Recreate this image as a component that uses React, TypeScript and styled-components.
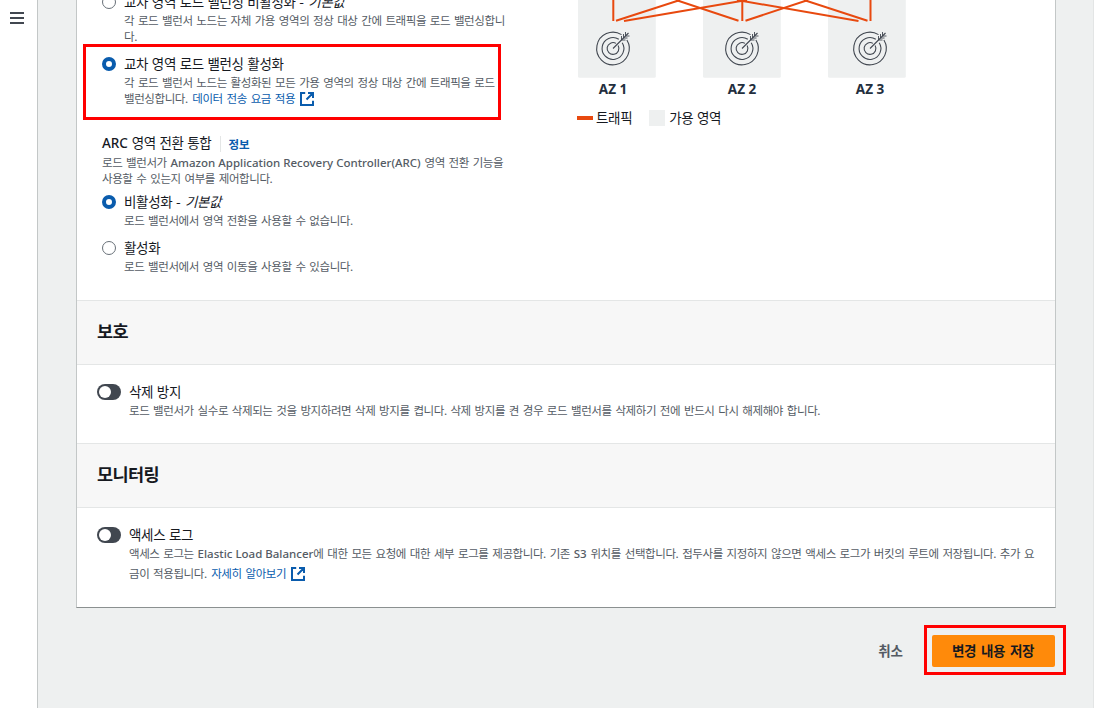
import React from 'react';
import styled, { createGlobalStyle, css } from 'styled-components';

const colors = {
  text: '#16191f',
  muted: '#545b64',
  link: '#0a5cad',
  page: '#eef0f0',
  border: '#e4e6e6',
  traffic: '#e8490f',
  mark: '#ff0000',
};

interface RadioOptionProps {
  label: string;
  isDefault?: boolean;
  checked?: boolean;
  gap?: number;
  children: React.ReactNode;
}

const ExternalIcon = () => (
  <IconSvg width="14" height="14" viewBox="0 0 14 14">
    <path d="M5.2 1H1v12h12V8.8M8 1h5v5M13 1L6.5 7.5" />
  </IconSvg>
);

const RadioOption: React.FC<RadioOptionProps> = ({
  label,
  isDefault = false,
  checked = false,
  gap = 0,
  children,
}) => (
  <Option $gap={gap}>
    <Radio $checked={checked} />
    <div>
      <Label>
        {label}
        {isDefault && (
          <>
            {' '}- <DefaultMark>기본값</DefaultMark>
          </>
        )}
      </Label>
      <Description>{children}</Description>
    </div>
  </Option>
);

const Target: React.FC<{ x: number }> = ({ x }) => (
  <g transform={`translate(${x} 48.5)`} fill="none" stroke="#414750" strokeWidth="1.1">
    <path d="M8.5 -13.9A16.3 16.3 0 1 0 13.9 -8.5" />
    <path d="M5.8 -9.2A10.9 10.9 0 1 0 9.2 -5.8" />
    <path d="M3 -5.1A5.9 5.9 0 1 0 5.1 -3" />
    <path d="M0 0L15.5 -15.5" />
    <path
      d="M8.5 -8.5V-12.5M8.5 -8.5H12.5M10.5 -10.5V-14.5M10.5 -10.5H14.5M12.5 -12.5V-16.5M12.5 -12.5H16.5"
      strokeWidth="0.9"
    />
  </g>
);

const ZoneDiagram = () => (
  <svg width="328" height="98" viewBox="578 0 328 98">
    {[578, 703, 828].map((x) => (
      <rect key={x} x={x} y="-4" width="77.8" height="81.7" rx="1.5" fill={colors.page} />
    ))}
    <g stroke={colors.traffic} strokeWidth="2">
      <path d="M613.3 0V21M742.3 0V21M870.5 0V21" />
      <path d="M680 0L616 20.7M747 0L624 21" />
      <path d="M676 0L738.5 20.7M808 0L745.5 20.7" />
      <path d="M737 0L858.5 21M804 0L867.5 20.7" />
    </g>
    {[613, 742, 870].map((x, i) => (
      <React.Fragment key={x}>
        <Target x={x} />
        <ZoneName x={x} y="94" textAnchor="middle">
          AZ {i + 1}
        </ZoneName>
      </React.Fragment>
    ))}
  </svg>
);

export default function App() {
  return (
    <>
      <GlobalStyle />
      <Page>
        <SideBar>
          <MenuIcon>
            <span />
            <span />
            <span />
          </MenuIcon>
        </SideBar>
        <Main>
          <Panel>
            <Routing>
              <Settings>
                <RadioOption label="교차 영역 로드 밸런싱 비활성화" isDefault>
                  각 로드 밸런서 노드는 자체 가용 영역의 정상 대상 간에 트래픽을 로드 밸런싱합니
                  <br />
                  다.
                </RadioOption>
                <Highlight>
                  <RadioOption label="교차 영역 로드 밸런싱 활성화" checked>
                    각 로드 밸런서 노드는 활성화된 모든 가용 영역의 정상 대상 간에 트래픽을 로드
                    <br />
                    밸런싱합니다. <Link>데이터 전송 요금 적용</Link>
                    <ExternalIcon />
                  </RadioOption>
                </Highlight>
                <FieldTitle>
                  <Label>
                    <Latin>ARC</Latin> 영역 전환 통합
                  </Label>
                  <InfoLink>정보</InfoLink>
                </FieldTitle>
                <Description>
                  로드 밸런서가 <Latin>Amazon Application Recovery Controller(ARC)</Latin> 영역 전환
                  기능을
                  <br />
                  사용할 수 있는지 여부를 제어합니다.
                </Description>
                <RadioOption label="비활성화" isDefault checked gap={7}>
                  로드 밸런서에서 영역 전환을 사용할 수 없습니다.
                </RadioOption>
                <RadioOption label="활성화" gap={11}>
                  로드 밸런서에서 영역 이동을 사용할 수 있습니다.
                </RadioOption>
              </Settings>
              <Diagram>
                <ZoneDiagram />
                <Legend>
                  <TrafficSwatch />
                  <LegendLabel>트래픽</LegendLabel>
                  <ZoneSwatch />
                  <LegendLabel>가용 영역</LegendLabel>
                </Legend>
              </Diagram>
            </Routing>
            <SectionHeader>보호</SectionHeader>
            <ToggleRow $height={78}>
              <Toggle />
              <div>
                <Label>삭제 방지</Label>
                <Description>
                  로드 밸런서가 실수로 삭제되는 것을 방지하려면 삭제 방지를 켭니다. 삭제 방지를 켠 경우 로드
                  밸런서를 삭제하기 전에 반드시 다시 해제해야 합니다.
                </Description>
              </div>
            </ToggleRow>
            <SectionHeader>모니터링</SectionHeader>
            <ToggleRow $height={99}>
              <Toggle />
              <div>
                <Label>액세스 로그</Label>
                <Description $tall>
                  액세스 로그는 <Latin>Elastic Load Balancer</Latin>에 대한 모든 요청에 대한 세부 로그를
                  제공합니다. 기존 <Latin>S3</Latin> 위치를 선택합니다. 접두사를 지정하지 않으면 액세스
                  로그가 버킷의 루트에 저장됩니다. 추가 요
                  <br />
                  금이 적용됩니다. <Link>자세히 알아보기</Link>
                  <ExternalIcon />
                </Description>
              </div>
            </ToggleRow>
          </Panel>
          <Footer>
            <CancelButton type="button">취소</CancelButton>
            <SaveFrame>
              <SaveButton type="button">변경 내용 저장</SaveButton>
            </SaveFrame>
          </Footer>
        </Main>
      </Page>
    </>
  );
}

const GlobalStyle = createGlobalStyle`
  * {
    box-sizing: border-box;
  }
  body {
    margin: 0;
    overflow: hidden;
    color: ${colors.text};
    font-family: 'Noto Sans CJK KR', sans-serif;
  }
`;

const Page = styled.div`
  display: flex;
  height: 708px;
  overflow: hidden;
  background: ${colors.page};
`;

const SideBar = styled.aside`
  flex: 0 0 38px;
  padding: 12px 0 0 10px;
  background: #ffffff;
  border-right: 1px solid #c3c7c7;
`;

const MenuIcon = styled.div`
  display: flex;
  flex-direction: column;
  gap: 3px;
  width: 14px;

  span {
    height: 2px;
    background: #414750;
  }
`;

const Main = styled.main`
  flex: 1;
  padding: 0 27px 0 38px;
  border-right: 1px solid #e3e5e5;
`;

const Panel = styled.section`
  width: 980px;
  height: 608px;
  overflow: hidden;
  background: #ffffff;
  border: solid #c3c7c7;
  border-width: 0 1px 1px;
  border-bottom-color: #8b9090;
`;

const Routing = styled.div`
  display: flex;
  height: 300px;
`;

const Settings = styled.div`
  flex: 0 0 501px;
  padding-left: 25px;
  margin-top: -7px;
`;

const Option = styled.div<{ $gap: number }>`
  display: flex;
  gap: 8px;
  margin-top: ${({ $gap }) => $gap}px;
`;

const Radio = styled.span<{ $checked: boolean }>`
  flex: 0 0 14px;
  height: 14px;
  margin-top: 2px;
  background: #ffffff;
  border-radius: 50%;
  border: ${({ $checked }) => ($checked ? `4.5px solid ${colors.link}` : '1px solid #687078')};
`;

const labelText = css`
  font-size: 13.5px;
  line-height: 16px;
  letter-spacing: -0.35px;
  word-spacing: 1px;
  white-space: nowrap;
`;

const Label = styled.div`
  ${labelText}
  padding-bottom: 3px;
`;

const DefaultMark = styled.em`
  margin-left: 1px;
`;

const LegendLabel = styled.span`
  ${labelText}
`;

const Description = styled.div<{ $tall?: boolean }>`
  color: ${colors.muted};
  font-size: 11.5px;
  line-height: ${({ $tall }) => ($tall ? 20 : 16)}px;
  letter-spacing: -0.41px;
  word-spacing: 1.6px;
  white-space: nowrap;
  margin-top: ${({ $tall }) => ($tall ? -2 : 0)}px;
`;

const Latin = styled.span`
  font-family: 'Noto Sans', sans-serif;
  font-weight: 500;
  line-height: 1;
  letter-spacing: 0;
  word-spacing: 0;
`;

const Highlight = styled.div`
  width: 418px;
  height: 76px;
  margin: 0 0 0 -19px;
  padding: 8px 0 0 16px;
  border: 3px solid ${colors.mark};
`;

const linkColor = css`
  color: ${colors.link};
`;

const Link = styled.span`
  ${linkColor}
  margin-left: 0.7px;
`;

const InfoLink = styled.span`
  ${linkColor}
  padding-left: 7px;
  border-left: 1px solid #e4e6e6;
  font-size: 11.5px;
  font-weight: 700;
  line-height: 16px;
  letter-spacing: -0.1px;
`;

const IconSvg = styled.svg`
  margin-left: 5px;
  vertical-align: -3px;
  fill: none;
  stroke: ${colors.link};
  stroke-width: 2;
`;

const FieldTitle = styled.div`
  display: flex;
  align-items: center;
  gap: 9px;
  margin-top: 14px;
`;

const Diagram = styled.div`
  display: flex;
  flex-direction: column;
`;

const ZoneName = styled.text`
  fill: #232f3e;
  font-family: 'Noto Sans', sans-serif;
  font-size: 13.5px;
  font-weight: 700;
`;

const Legend = styled.div`
  display: flex;
  align-items: center;
  margin-top: 12px;

  ${LegendLabel} {
    margin-top: -2px;
  }
`;

const TrafficSwatch = styled.span`
  width: 16px;
  height: 4px;
  margin: 0 3px 0 -1px;
  background: ${colors.traffic};
`;

const ZoneSwatch = styled.span`
  width: 16px;
  height: 16px;
  margin: 0 4px 0 17px;
  background: ${colors.page};
`;

const SectionHeader = styled.h2`
  height: 65px;
  margin: 0;
  padding-left: 20px;
  background: #f7f7f7;
  border: solid ${colors.border};
  border-width: 1px 0;
  font-size: 17.5px;
  font-weight: 700;
  line-height: 59px;
  letter-spacing: -0.6px;
`;

const ToggleRow = styled.div<{ $height: number }>`
  display: flex;
  gap: 8px;
  height: ${({ $height }) => $height}px;
  padding: 18px 0 0 20px;
`;

const Toggle = styled.span`
  flex: 0 0 24px;
  height: 16px;
  margin-top: 1px;
  padding: 2px;
  background: #414750;
  border-radius: 8px;

  &::before {
    content: '';
    display: block;
    width: 12px;
    height: 12px;
    background: #ffffff;
    border-radius: 50%;
  }
`;

const Footer = styled.div`
  display: flex;
  align-items: center;
  justify-content: flex-end;
  gap: 21px;
  margin-top: 17px;
`;

const buttonText = css`
  border: 0;
  font-family: inherit;
  font-size: 13.5px;
  font-weight: 700;
  letter-spacing: -0.3px;
  word-spacing: 2px;
  white-space: nowrap;
`;

const CancelButton = styled.button`
  ${buttonText}
  padding: 0;
  background: none;
  color: ${colors.muted};
  letter-spacing: 0;
`;

const SaveFrame = styled.div`
  width: 142px;
  height: 50px;
  padding: 7px 0 0 5px;
  border: 3px solid ${colors.mark};
`;

const SaveButton = styled.button`
  ${buttonText}
  display: block;
  width: 123px;
  height: 32px;
  padding: 0 1px 2px 0;
  background: #ff8a0a;
  border-radius: 2px;
  color: ${colors.text};
`;
